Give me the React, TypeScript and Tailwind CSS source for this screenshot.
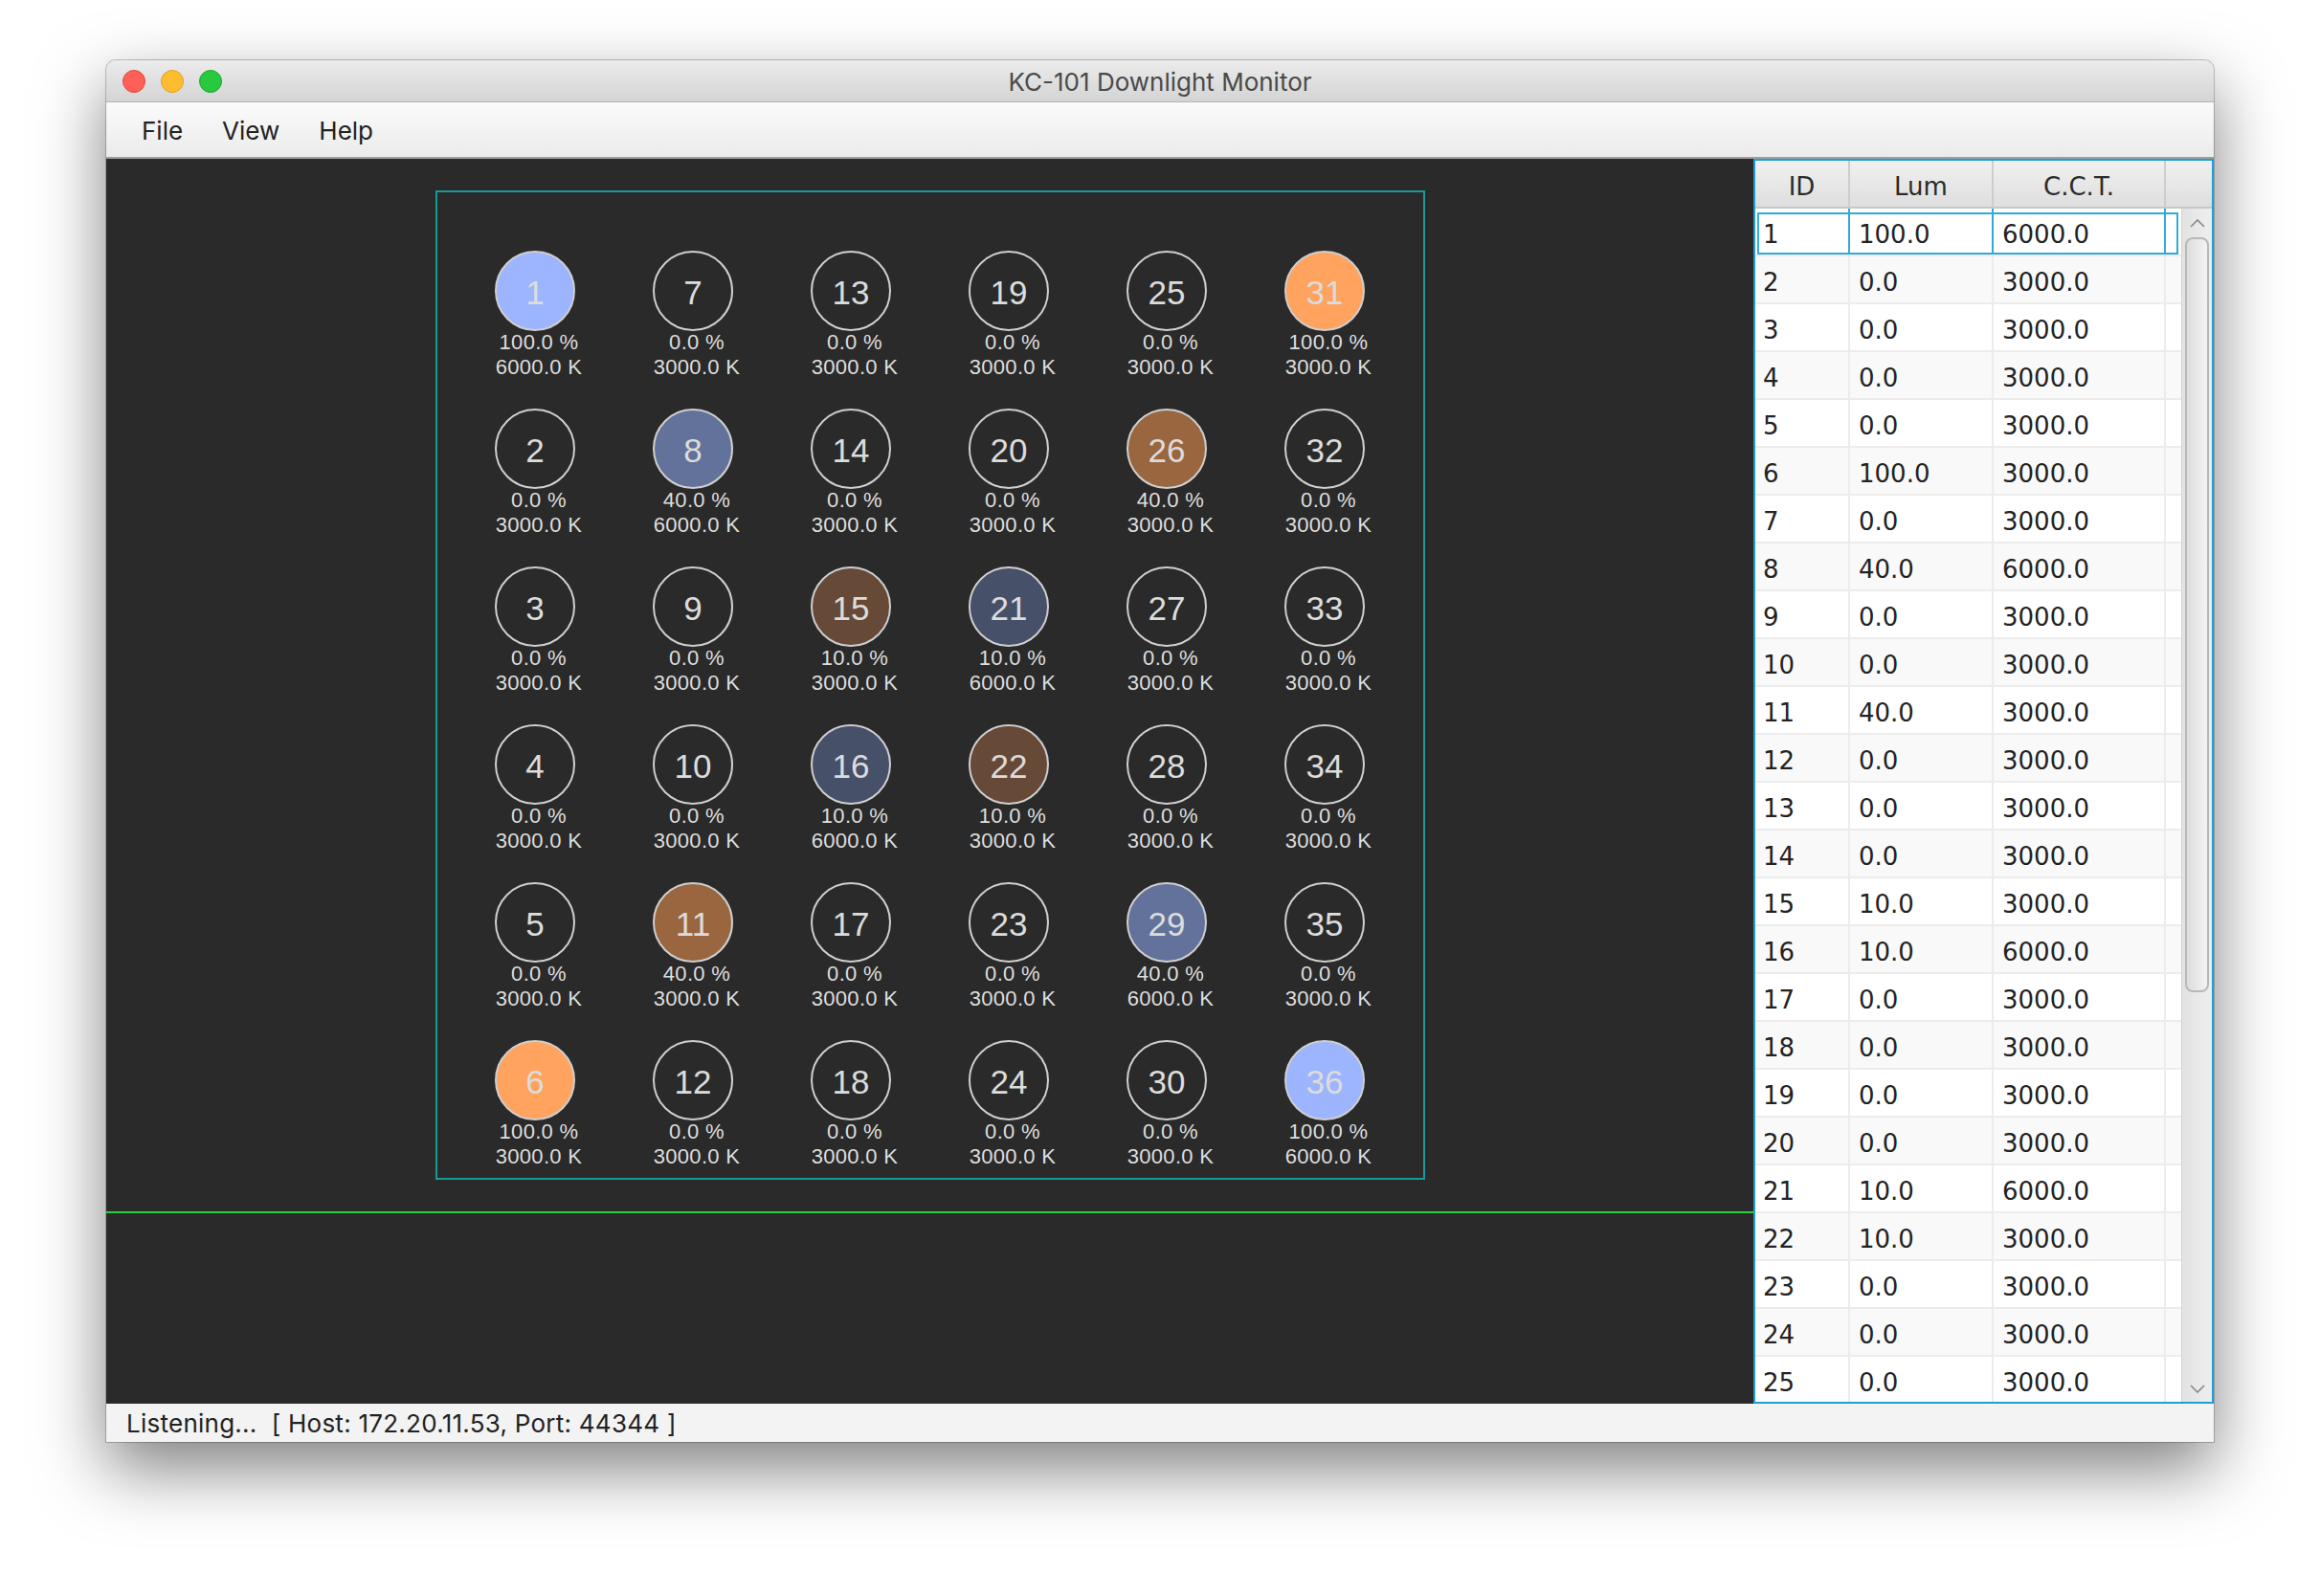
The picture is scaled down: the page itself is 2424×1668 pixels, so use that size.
import React from 'react';

type Light = { id: number; lum: number; cct: number };

// luminance per fixture id; anything missing is off
const LUM: Record<number, number> = {
  1: 100, 6: 100, 8: 40, 11: 40, 15: 10, 16: 10,
  21: 10, 22: 10, 26: 40, 29: 40, 31: 100, 36: 100,
};
const COOL = new Set([1, 8, 16, 21, 29, 36]);

const LIGHTS: Light[] = Array.from({ length: 36 }, (_, i) => ({
  id: i + 1,
  lum: LUM[i + 1] ?? 0,
  cct: COOL.has(i + 1) ? 6000 : 3000,
}));

function fillFor(l: Light) {
  if (l.lum === 0) return 'bg-transparent';
  if (l.cct === 6000) {
    if (l.lum === 100) return 'bg-[#9db4ff]';
    if (l.lum === 40) return 'bg-[#62729b]';
    return 'bg-[#465069]';
  }
  if (l.lum === 100) return 'bg-[#ffa35f]';
  if (l.lum === 40) return 'bg-[#99663f]';
  return 'bg-[#664a37]';
}

function Lamp({ light }: { light: Light }) {
  return (
    <div className="flex h-[165px] w-[165px] flex-col items-center pt-[41px]">
      <div
        className={`flex h-[84px] w-[84px] shrink-0 items-center justify-center rounded-full border-2 border-[#cfcfcf] ${fillFor(light)}`}
      >
        <span className="mt-[2px] text-[35px] leading-none text-[#dcdcdc]">{light.id}</span>
      </div>
      <div className="-mt-px pl-[8px] text-center text-[22px] leading-[26px] tracking-[0.3px] text-[#dedede]">
        <div>{light.lum.toFixed(1)} %</div>
        <div>{light.cct.toFixed(1)} K</div>
      </div>
    </div>
  );
}

function Chevron({ down }: { down?: boolean }) {
  return (
    <svg width="16" height="10" viewBox="0 0 16 10" className="text-[#8a8a8a]">
      <polyline
        points={down ? '1,1 8,8 15,1' : '1,9 8,2 15,9'}
        fill="none"
        stroke="currentColor"
        strokeWidth="1.6"
      />
    </svg>
  );
}

function LightTable() {
  const rows = LIGHTS.slice(0, 25);
  return (
    <div className="flex h-full w-[481px] flex-col border-2 border-[#1ba0d9] bg-white font-['DejaVu_Sans',sans-serif] text-[26px] text-[#222]">
      {/* header */}
      <div className="flex h-[50px] shrink-0 border-b-2 border-[#c8c8c8] bg-gradient-to-b from-[#f1f1f1] to-[#dedede] text-[#2b2b2b]">
        <div className="flex w-[99px] items-center justify-center border-r-2 border-[#cdcdcd] pt-[6px]">ID</div>
        <div className="flex w-[150px] items-center justify-center border-r-2 border-[#cdcdcd] pt-[6px]">Lum</div>
        <div className="flex w-[180px] items-center justify-center border-r-2 border-[#cdcdcd] pt-[6px]">C.C.T.</div>
        <div className="flex-1" />
      </div>

      {/* body */}
      <div className="flex min-h-0 flex-1">
        <div className="min-w-0 flex-1 overflow-hidden">
          {rows.map((r, i) => {
            const sel = i === 0;
            const sep = sel ? 'border-[#34a9d9]' : 'border-[#ececec]';
            return (
              <div
                key={r.id}
                className={`relative flex h-[50px] border-b-2 border-[#ececec] ${i % 2 === 0 ? 'bg-white' : 'bg-[#f9f9f9]'}`}
              >
                <div className={`flex w-[99px] items-center border-r-2 pt-[6px] pl-[8px] ${sep}`}>{r.id}</div>
                <div className={`flex w-[150px] items-center border-r-2 pt-[6px] pl-[9px] ${sep}`}>{r.lum.toFixed(1)}</div>
                <div className={`flex w-[180px] items-center border-r-2 pt-[6px] pl-[9px] ${sep}`}>{r.cct.toFixed(1)}</div>
                <div className="flex-1" />
                {sel && (
                  <div className="pointer-events-none absolute top-[4px] right-[3px] bottom-0 left-[2px] border-2 border-[#34a9d9]" />
                )}
              </div>
            );
          })}
        </div>

        {/* scrollbar */}
        <div className="flex w-[32px] shrink-0 flex-col border-l border-[#d4d4d4] bg-gradient-to-r from-[#e2e2e2] to-[#efefef]">
          <div className="flex h-[30px] shrink-0 items-center justify-center">
            <Chevron />
          </div>
          <div className="mx-[3px] h-[789px] shrink-0 rounded-[8px] border-2 border-[#b8b8b8] bg-gradient-to-r from-[#dedede] to-[#f3f3f3]" />
          <div className="flex-1" />
          <div className="flex h-[26px] shrink-0 items-start justify-center pt-[8px]">
            <Chevron down />
          </div>
        </div>
      </div>
    </div>
  );
}

export default function App() {
  return (
    <div className="min-h-[1668px] w-[2424px] bg-white pt-[63px] pl-[111px] font-['Inter','Noto_Sans',sans-serif]">
      <div className="flex h-[1444px] w-[2202px] flex-col overflow-hidden rounded-t-[10px] shadow-[0_28px_70px_rgba(0,0,0,0.5),0_0_0_1px_rgba(0,0,0,0.22)]">
        {/* title bar */}
        <div className="grid h-[44px] shrink-0 grid-cols-[1fr_auto_1fr] items-center border-b border-[#b3b3b3] bg-gradient-to-b from-[#ececec] to-[#d4d4d4]">
          <div className="flex items-center gap-[16px] pl-[17px]">
            <span className="h-[24px] w-[24px] rounded-full border border-[#e1463f] bg-[#fe5f57]" />
            <span className="h-[24px] w-[24px] rounded-full border border-[#dea225] bg-[#febc2e]" />
            <span className="h-[24px] w-[24px] rounded-full border border-[#1ba82b] bg-[#28c840]" />
          </div>
          <div className="pt-[2px] text-[26px] text-[#4a4a4a]">KC-101 Downlight Monitor</div>
          <div />
        </div>

        {/* menu bar */}
        <div className="flex h-[59px] shrink-0 items-center gap-[41px] border-b-2 border-[#9d9d9d] bg-gradient-to-b from-[#fbfbfb] to-[#ebebeb] pt-[2px] pl-[37px] text-[26px] text-[#222]">
          <span>File</span>
          <span>View</span>
          <span>Help</span>
        </div>

        {/* main */}
        <div className="flex h-[1301px] shrink-0">
          <div className="flex w-[1721px] flex-col bg-[#2a2a2a]">
            <div className="flex h-[1100px] items-center justify-center">
              <div className="grid grid-flow-col grid-cols-[repeat(6,165px)] grid-rows-[repeat(6,165px)] border-2 border-[#18999a] p-[20px] font-['Liberation_Sans',Arial,sans-serif]">
                {LIGHTS.map((l) => (
                  <Lamp key={l.id} light={l} />
                ))}
              </div>
            </div>
            <div className="h-[2px] bg-[#2ad03f]" />
            <div className="flex-1" />
          </div>
          <LightTable />
        </div>

        {/* status bar */}
        <div className="flex h-[40px] shrink-0 items-center bg-[#f3f3f3] pl-[21px] text-[26px] tracking-[0.25px] whitespace-pre text-[#222]">
          Listening...  [ Host: 172.20.11.53, Port: 44344 ]
        </div>
      </div>
    </div>
  );
}
